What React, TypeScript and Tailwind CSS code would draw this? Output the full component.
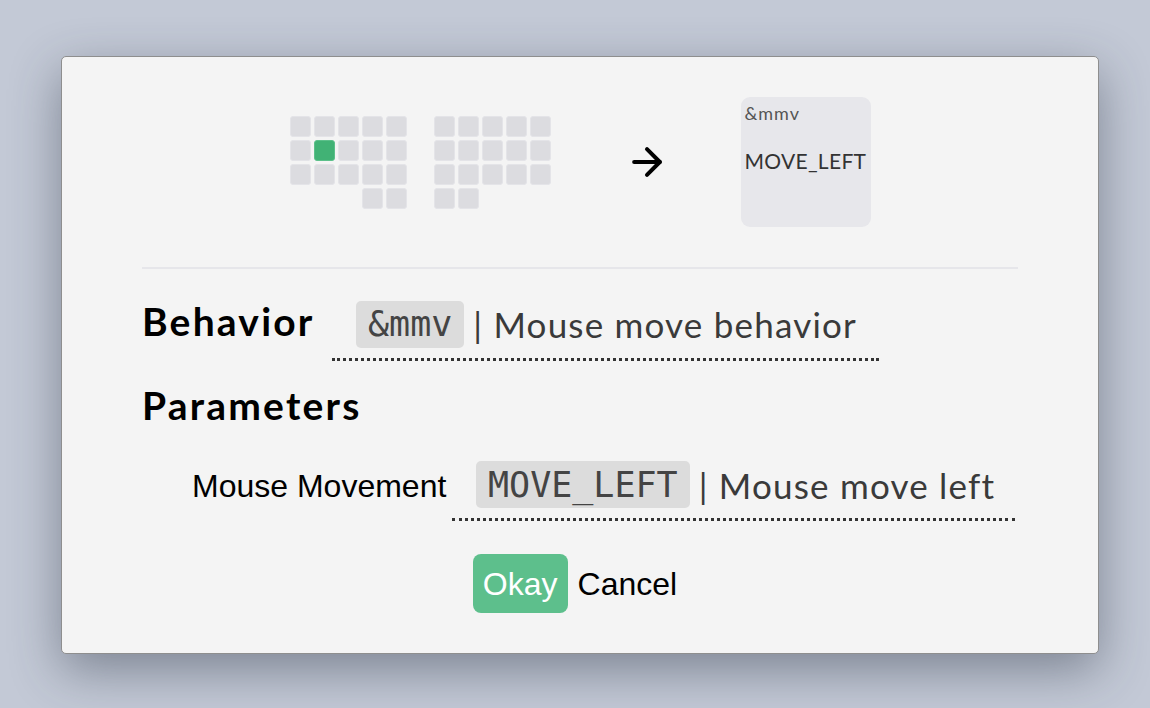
import { ArrowRight } from 'lucide-react'

// left and right halves, row by row: 1 = key, 2 = selected key, 0 = gap
const leftHalf = [
  [1, 1, 1, 1, 1],
  [1, 2, 1, 1, 1],
  [1, 1, 1, 1, 1],
  [0, 0, 0, 1, 1],
]
const rightHalf = [
  [1, 1, 1, 1, 1],
  [1, 1, 1, 1, 1],
  [1, 1, 1, 1, 1],
  [1, 1, 0, 0, 0],
]

function Half({ rows }: { rows: number[][] }) {
  return (
    <div className="grid grid-cols-5 gap-[3px]">
      {rows.flat().map((k, i) => (
        <div
          key={i}
          className={
            k === 0
              ? 'w-[21px] h-[21px]'
              : k === 2
                ? 'w-[21px] h-[21px] rounded-[3px] bg-[#41b275] border border-[#5cc08a]'
                : 'w-[21px] h-[21px] rounded-[3px] bg-[#dcdce0] border border-[#e4e4e8]'
          }
        />
      ))}
    </div>
  )
}

function Select({ code, label, width }: { code: string; label: string; width: string }) {
  return (
    <div className={`${width} flex items-center pl-6 pb-[7px] border-b-[3px] border-dotted border-[#333]`}>
      <span className="px-3 h-[47px] flex items-center rounded-[5px] bg-[#dcdcdc] text-[#444] text-[35px] font-['DejaVu_Sans_Mono',monospace]">
        {code}
      </span>
      <span className="ml-[9px] text-[35px] tracking-[1.2px] text-[#3a3a3a] font-['Lato',sans-serif]">| {label}</span>
    </div>
  )
}

export default function App() {
  return (
    <div className="w-[1150px] h-[708px] bg-[#c3c9d6] flex pl-[61px] pt-[56px]">
      <div className="w-[1038px] h-[598px] bg-[#f4f4f4] border border-[#8e8e8e] rounded-[5px] shadow-[0_16px_50px_rgba(40,48,64,0.45)] px-20 pt-10">
        {/* preview */}
        <div className="flex items-center justify-center pb-10 border-b-2 border-[#e6e6ea]">
          <div className="flex gap-[27px]">
            <Half rows={leftHalf} />
            <Half rows={rightHalf} />
          </div>
          <ArrowRight className="ml-[74px] mr-[72px] w-[44px] h-[44px] text-black" strokeWidth={2.2} />
          <div className="w-[130px] h-[130px] rounded-[9px] bg-[#e7e7eb] px-1 pt-[3px] font-['Lato',sans-serif]">
            <div className="text-[18px] tracking-[1px] text-[#555]">&amp;mmv</div>
            <div className="mt-[18px] text-[21px] tracking-[0.3px] text-[#333]">MOVE_LEFT</div>
          </div>
        </div>

        <div className="flex items-start mt-[29px]">
          <div className="h-[47px] flex items-center text-[39px] tracking-[2.2px] font-bold text-black font-['Lato',sans-serif] w-[190px]">
            Behavior
          </div>
          <Select code="&mmv" label="Mouse move behavior" width="w-[547px]" />
        </div>

        <div className="mt-[21px] text-[39px] tracking-[2.2px] font-bold text-black font-['Lato',sans-serif] leading-[47px]">
          Parameters
        </div>

        <div className="flex items-start mt-[30px] pl-[50px]">
          <div className="h-[47px] pt-[7px] flex items-center text-[32px] text-black font-['Liberation_Sans',sans-serif] w-[260px]">
            Mouse Movement
          </div>
          <Select code="MOVE_LEFT" label="Mouse move left" width="w-[563px]" />
        </div>

        <div className="flex justify-center mt-[33px] font-['Liberation_Sans',sans-serif] text-[32px]">
          <button className="h-[59px] px-[10px] rounded-[8px] bg-[#5dbf8c] text-white">Okay</button>
          <button className="h-[59px] px-[10px] text-black">Cancel</button>
        </div>
      </div>
    </div>
  )
}
